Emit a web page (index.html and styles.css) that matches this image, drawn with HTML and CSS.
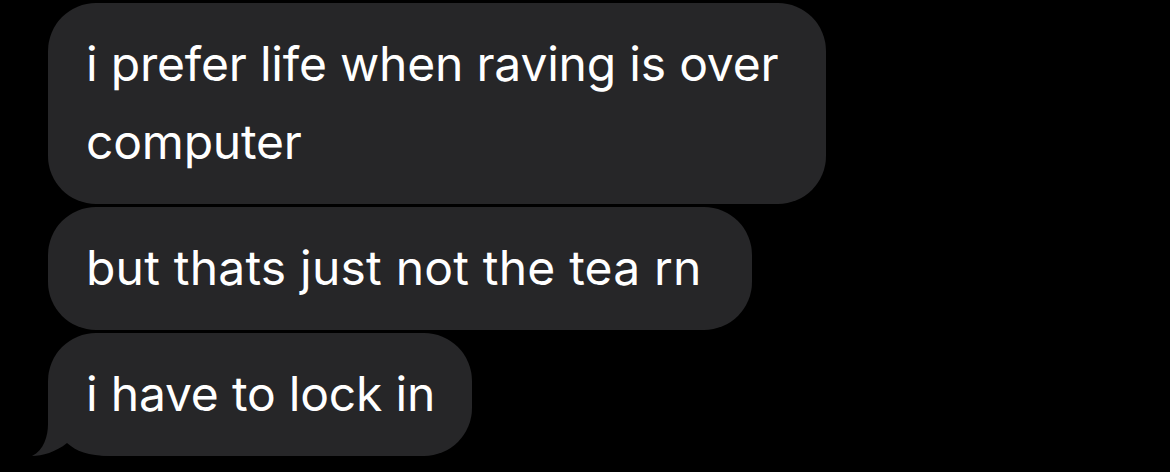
FILE: index.html
```html
<!DOCTYPE html>
<html>
<head>
<meta charset="utf-8">
<link rel="stylesheet" href="styles.css">
</head>
<body>
<div class="thread">
  <div class="bubble bubble-wide"><span class="text">i prefer life when raving is over computer</span></div>
  <div class="bubble"><span class="text">but thats just not the tea rn</span></div>
  <div class="bubble bubble-tail">
    <svg class="tail" width="80" height="70" viewBox="0 0 80 70" aria-hidden="true">
      <path d="M18 4 L18 38 C18 50 14 64 2 70 C12 70 26 66 37 57 C46 65 58 70 80 70 L80 4 Z" fill="#262628"/>
    </svg>
    <span class="text">i have to lock in</span>
  </div>
</div>
</body>
</html>
```
FILE: styles.css
```css
html, body {
  margin: 0;
  padding: 0;
  background: #000;
}
body {
  width: 1170px;
  height: 472px;
  overflow: hidden;
  font-family: Inter, "Liberation Sans", sans-serif;
}
.thread {
  display: flex;
  flex-direction: column;
  align-items: flex-start;
  gap: 3px;
  padding: 3px 0 0 48px;
}
.bubble {
  position: relative;
  box-sizing: border-box;
  background: #262628;
  color: #fff;
  font-size: 48px;
  line-height: 78px;
  letter-spacing: 0.2px;
  padding: 22px 50px 23px 38px;
  border-radius: 48px;
}
.text {
  position: relative;
  z-index: 1;
}
.bubble-wide {
  width: 778px;
  padding-right: 24px;
  letter-spacing: -0.2px;
}
.bubble-tail {
  padding-right: 37px;
  letter-spacing: -0.2px;
  border-bottom-left-radius: 62px;
}
.tail {
  position: absolute;
  left: -18px;
  bottom: 0;
  display: block;
}
```
